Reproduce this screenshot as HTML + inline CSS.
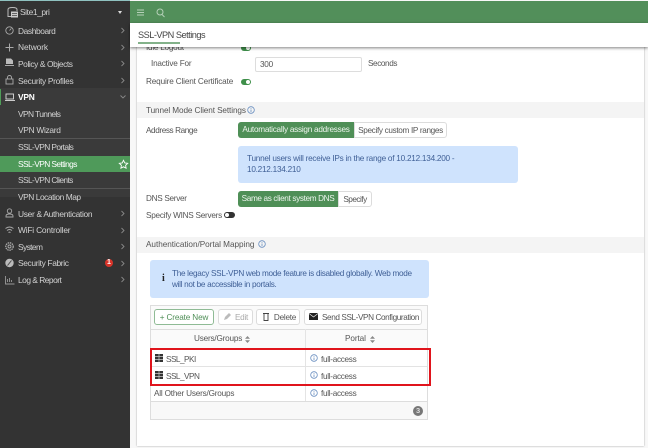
<!DOCTYPE html>
<html><head><meta charset="utf-8"><style>
html,body{margin:0;padding:0}
body{width:648px;height:448px;overflow:hidden;position:relative;background:#f8f8f8;font-family:"Liberation Sans",sans-serif;font-size:8.2px;letter-spacing:-.25px;color:#444}
div,span.a{position:absolute;white-space:nowrap;box-sizing:border-box}
svg{position:absolute;overflow:visible}
.n{left:18px;color:#d2d2d2;height:12px;line-height:12px;font-size:8.4px}
.l{color:#555;line-height:12px;height:12px}
.sec{left:137px;width:507px;background:#f4f4f4;height:16px;line-height:16px;padding-left:9px;color:#555;letter-spacing:-.03px}
.btn{background:#fff;border:1px solid #dcdcdc;border-radius:3px;height:16px;line-height:15px;text-align:center;color:#555}
.g{background:#4f8f57;color:#eef5ee;height:16px;line-height:16px;text-align:center;border-radius:3px 0 0 3px}
.info{background:#cfe3fd;border-radius:3px;color:#3f5f96;line-height:11px}
.tg{width:10px;height:6px;border-radius:3px;background:#3f8f4a}
.tg:after{content:"";position:absolute;right:1px;top:1px;width:4px;height:4px;border-radius:50%;background:#fff}
.cell{color:#555;height:14px;line-height:14px}
.sep{background:#e3e3e3;height:1px}
</style></head><body>
<!-- sidebar -->
<div style="left:0;top:0;width:130px;height:448px;background:#333"></div>
<div style="left:0;top:0;width:648px;height:1px;background:#8fc2c0"></div>
<div style="left:0;top:88px;width:130px;height:109px;background:#3a3a3a"></div>
<div style="left:0;top:89px;width:1px;height:16px;background:#4f9d58"></div>
<div style="left:0;top:138px;width:130px;height:1px;background:#555"></div>
<div style="left:0;top:188px;width:130px;height:1px;background:#555"></div>
<div style="left:0;top:156px;width:130px;height:16px;background:#4f9a5a"></div>

<svg style="left:7px;top:7px" width="11" height="11" viewBox="0 0 11 11"><path d="M1 2.500V9.500H5M1 2.500Q1 .5 5.500 .5T10 2.500V4" fill="none" stroke="#bbb" stroke-width="1"/><rect x="4" y="4.500" width="7" height="6" fill="#ccc"/><path d="M5 6.500h5M5 8.500h5" stroke="#444" stroke-width=".7"/></svg>
<div class="n" style="left:20px;top:6px;letter-spacing:-.4px">Site1_pri</div>
<div style="left:118px;top:11px;border:2.200px solid transparent;border-top:3px solid #ddd;border-bottom:0"></div>

<div class="n" style="top:25px;letter-spacing:-.4px">Dashboard</div>
<div class="n" style="top:41px;letter-spacing:-.1px">Network</div>
<div class="n" style="top:58px;letter-spacing:-.4px">Policy &amp; Objects</div>
<div class="n" style="top:75px;letter-spacing:-.3px">Security Profiles</div>
<div class="n" style="top:91px;color:#fff;font-weight:bold;letter-spacing:-.2px">VPN</div>
<div class="n" style="top:108px;letter-spacing:-.6px">VPN Tunnels</div>
<div class="n" style="top:124px;letter-spacing:-.3px">VPN Wizard</div>
<div class="n" style="top:141px;letter-spacing:-.6px">SSL-VPN Portals</div>
<div class="n" style="top:158px;color:#fff;letter-spacing:-.6px">SSL-VPN Settings</div>
<div class="n" style="top:174px;letter-spacing:-.6px">SSL-VPN Clients</div>
<div class="n" style="top:191px;letter-spacing:-.45px">VPN Location Map</div>
<div class="n" style="top:208px;letter-spacing:-.3px">User &amp; Authentication</div>
<div class="n" style="top:224px;letter-spacing:-.2px">WiFi Controller</div>
<div class="n" style="top:241px;letter-spacing:-.6px">System</div>
<div class="n" style="top:257px;letter-spacing:-.35px">Security Fabric</div>
<div class="n" style="top:274px;letter-spacing:-.5px">Log &amp; Report</div>

<svg style="left:0;top:0" width="130" height="300" fill="none" stroke="#aaa" stroke-width=".9">
<g stroke="#888">
<path d="M121.500 28l2.500 2.500-2.500 2.500M121.500 45l2.500 2.500-2.500 2.500M121.500 61l2.500 2.500-2.500 2.500M121.500 78l2.500 2.500-2.500 2.500M121.500 211l2.500 2.500-2.500 2.500M121.500 228l2.500 2.500-2.500 2.500M121.500 244l2.500 2.500-2.500 2.500M121.500 261l2.500 2.500-2.500 2.500M121.500 277l2.500 2.500-2.500 2.500M120.500 95.500l2.500 2.500 2.500-2.500"/>
</g>
<circle cx="9.500" cy="30.500" r="3.700"/><path d="M9.500 30.500l1.800-2"/>
<path d="M5.500 47.500h8M9.500 43.500v8" stroke-width="1"/>
<path d="M6 58.500h5l2 2v3.500H6z" fill="#bbb" stroke="none"/><path d="M5 65.500h9" stroke-width="1"/>
<rect x="6" y="79" width="7" height="5" /><path d="M7.500 79v-1.500a2 2 0 0 1 4 0V79"/>
<rect x="6" y="94" width="7.500" height="5" stroke="#ddd"/><path d="M5 100.500h10" stroke="#ddd"/>
<path d="M118.500 160.300l1.300 2.600 2.900.4-2.100 2 .5 2.900-2.600-1.400-2.600 1.400.5-2.900-2.100-2 2.900-.4z" stroke="#fff" transform="translate(5 0)"/>
<circle cx="9.500" cy="211" r="2.200"/><path d="M6 217v-1q0-2 3.500-2t3.500 2v1z"/>
<path d="M5.500 228.500q4-3 8 0M7 230.500q2.500-2 5 0M8.500 232.500q1-.8 2 0"/>
<circle cx="9.500" cy="246.500" r="1.500"/><circle cx="9.500" cy="246.500" r="3.700" stroke-dasharray="1.500 .7" stroke-width="1.300"/>
<circle cx="9.500" cy="263" r="4.200" fill="#bbb" stroke="none"/><path d="M7.500 265.500l4-5" stroke="#444"/>
<path d="M5.500 276v8h9M7.500 282v-3M9.500 282v-4M11.500 282v-2" stroke="#999"/>
</svg>
<div style="left:105px;top:259px;width:8px;height:8px;border-radius:50%;background:#d8342a;color:#fff;font-size:7px;font-weight:bold;text-align:center;line-height:8px;letter-spacing:0">1</div>

<!-- main panel -->
<div style="left:130px;top:0;width:518px;height:448px;background:#f8f8f8"></div>
<div style="left:137px;top:40px;width:507px;height:406px;background:#fff;box-shadow:0 0 1.500px #999"></div>

<div class="l" style="left:146px;top:42px">Idle Logout</div>
<div class="tg" style="left:241px;top:45px"></div>
<div class="l" style="left:151px;top:58px;letter-spacing:-.2px">Inactive For</div>
<div style="left:255px;top:57px;width:107px;height:15px;border:1px solid #ddd;border-radius:2px;background:#fff;line-height:13px;padding-left:4px;color:#555">300</div>
<div class="l" style="left:368px;top:58px;letter-spacing:-.4px">Seconds</div>
<div class="l" style="left:146px;top:76px;letter-spacing:-.15px">Require Client Certificate</div>
<div class="tg" style="left:241px;top:79px"></div>

<div class="sec" style="top:102px;line-height:17px;letter-spacing:-.1px">Tunnel Mode Client Settings</div>
<svg style="left:247px;top:106px" width="8" height="8"><circle cx="4" cy="4" r="3.300" fill="none" stroke="#6a8fc0" stroke-width=".8"/><path d="M4 3.500v2.500M4 2v.8" stroke="#6a8fc0" stroke-width=".8"/></svg>

<div class="l" style="left:146px;top:125px;letter-spacing:-.4px">Address Range</div>
<div class="g" style="left:238px;top:122px;width:116px">Automatically assign addresses</div>
<div class="btn" style="left:354px;top:122px;width:93px;border-radius:0 3px 3px 0;letter-spacing:-.33px">Specify custom IP ranges</div>
<div class="info" style="left:238px;top:146px;width:280px;height:37px;padding:8px 9px 0;line-height:10.500px;letter-spacing:-.24px">Tunnel users will receive IPs in the range of 10.212.134.200 -<br>10.212.134.210</div>
<div class="l" style="left:146px;top:193px;letter-spacing:-.3px">DNS Server</div>
<div class="g" style="left:238px;top:191px;width:100px;letter-spacing:-.35px">Same as client system DNS</div>
<div class="btn" style="left:338px;top:191px;width:34px;border-radius:0 3px 3px 0;letter-spacing:-.5px">Specify</div>
<div class="l" style="left:146px;top:210px">Specify WINS Servers</div>
<div style="left:224px;top:212px;width:11px;height:6px;border-radius:3px;background:#333"></div>
<div style="left:225px;top:213px;width:4px;height:4px;border-radius:50%;background:#fff"></div>

<div class="sec" style="top:237px">Authentication/Portal Mapping</div>
<svg style="left:258px;top:240px" width="8" height="8"><circle cx="4" cy="4" r="3.300" fill="none" stroke="#6a8fc0" stroke-width=".8"/><path d="M4 3.500v2.500M4 2v.8" stroke="#6a8fc0" stroke-width=".8"/></svg>

<div class="info" style="left:150px;top:260px;width:279px;height:38px;padding:8px 0 0 22px;letter-spacing:-.3px">The legacy SSL-VPN web mode feature is disabled globally. Web mode<br>will not be accessible in portals.</div>
<div style="left:162px;top:274px;font-weight:bold;font-family:'Liberation Serif',serif;font-size:10px;color:#222;line-height:10px">i</div>

<!-- table -->
<div style="left:150px;top:305px;width:278px;height:115px;border:1px solid #ddd;background:#fff"></div>
<div style="left:151px;top:306px;width:276px;height:23px;background:#fafafa"></div>
<div style="left:154px;top:309px;width:60px;height:16px;background:#fff;border:1px solid #8fbb95;border-radius:3px;color:#4f8f57;line-height:15px;text-align:center;letter-spacing:-.15px">+ Create New</div>
<div class="btn" style="left:218px;top:309px;width:35px;color:#aaa;padding-left:12px">Edit</div>
<svg style="left:223px;top:312px" width="9" height="9"><path d="M1 8l1-3 4-4 2 2-4 4z" fill="#bbb"/></svg>
<div class="btn" style="left:256px;top:309px;width:44px;padding-left:14px">Delete</div>
<svg style="left:262px;top:312px" width="8" height="10" fill="none" stroke="#444" stroke-width=".9"><path d="M1 1.500h6M2 2v6.500h4V2"/></svg>
<div class="btn" style="left:304px;top:309px;width:118px;padding-left:15px;letter-spacing:-.4px">Send SSL-VPN Configuration</div>
<svg style="left:309px;top:313px" width="9" height="7"><rect width="9" height="7" fill="#222"/><path d="M0 .5l4.500 3.500L9 .5" fill="none" stroke="#fff" stroke-width=".6"/></svg>

<div style="left:151px;top:329px;width:276px;height:19px;background:#fafafa;border-top:1px solid #ddd"></div>
<div style="left:305px;top:329px;width:1px;height:72px;background:#e4e4e4"></div>
<div class="cell" style="left:194px;top:332px;letter-spacing:-.2px">Users/Groups</div>
<svg style="left:245px;top:336px" width="5" height="7" fill="#888"><path d="M0 2.700L2.500 0 5 2.700zM0 4.300L2.500 7 5 4.300z"/></svg>
<div class="cell" style="left:345px;top:332px;letter-spacing:-.1px">Portal</div>
<svg style="left:370px;top:336px" width="5" height="7" fill="#888"><path d="M0 2.700L2.500 0 5 2.700zM0 4.300L2.500 7 5 4.300z"/></svg>
<div class="sep" style="left:151px;top:348px;width:276px"></div>
<div class="sep" style="left:151px;top:366px;width:276px"></div>
<div class="sep" style="left:151px;top:384px;width:276px"></div>
<div class="sep" style="left:151px;top:401px;width:276px;background:#ddd"></div>
<div style="left:151px;top:402px;width:276px;height:17px;background:#f8f8f8"></div>

<svg style="left:155px;top:354px" width="8" height="8"><rect width="8" height="8" fill="#333"/><path d="M0 2.500h8M0 5.500h8M4 0v8" stroke="#ccc" stroke-width=".7"/></svg>
<svg style="left:155px;top:371px" width="8" height="8"><rect width="8" height="8" fill="#333"/><path d="M0 2.500h8M0 5.500h8M4 0v8" stroke="#ccc" stroke-width=".7"/></svg>
<div class="cell" style="left:166px;top:353px;letter-spacing:-.5px">SSL_PKI</div>
<div class="cell" style="left:166px;top:370px;letter-spacing:-.5px">SSL_VPN</div>
<div class="cell" style="left:154px;top:387px;letter-spacing:-.2px">All Other Users/Groups</div>
<svg style="left:310px;top:354px" width="8" height="8"><circle cx="4" cy="4" r="3.300" fill="none" stroke="#6a8fc0" stroke-width=".8"/><path d="M4 3.500v2.500M4 2v.8" stroke="#6a8fc0" stroke-width=".8"/></svg>
<svg style="left:310px;top:371px" width="8" height="8"><circle cx="4" cy="4" r="3.300" fill="none" stroke="#6a8fc0" stroke-width=".8"/><path d="M4 3.500v2.500M4 2v.8" stroke="#6a8fc0" stroke-width=".8"/></svg>
<svg style="left:310px;top:389px" width="8" height="8"><circle cx="4" cy="4" r="3.300" fill="none" stroke="#6a8fc0" stroke-width=".8"/><path d="M4 3.500v2.500M4 2v.8" stroke="#6a8fc0" stroke-width=".8"/></svg>
<div class="cell" style="left:321px;top:353px;letter-spacing:-.3px">full-access</div>
<div class="cell" style="left:321px;top:370px;letter-spacing:-.3px">full-access</div>
<div class="cell" style="left:321px;top:387px;letter-spacing:-.3px">full-access</div>
<div style="left:413px;top:406px;width:10px;height:10px;border-radius:50%;background:#777;color:#ddd;font-size:7.500px;font-weight:bold;text-align:center;line-height:10px">3</div>

<div style="left:150px;top:348px;width:281px;height:38px;border:2px solid #e0141c"></div>

<!-- header -->
<div style="left:130px;top:1px;width:518px;height:22px;background:#528f5a"></div>
<svg style="left:136px;top:8px" width="30" height="10" fill="none" stroke="#b5d0b8" stroke-width="1"><path d="M1 2h7M1 4.500h7M1 7h7"/><circle cx="24" cy="4" r="3"/><path d="M26 6.500l2.500 2.500"/></svg>
<div style="left:130px;top:23px;width:518px;height:24px;background:#fff;box-shadow:0 1px 3px rgba(0,0,0,.5)"></div>
<div style="left:138px;top:28px;color:#444;font-size:9.200px;letter-spacing:-.5px;line-height:14px;height:14px">SSL-VPN Settings</div>
<div style="left:138px;top:42px;width:42px;height:2px;background:#83b28a"></div>
</body></html>
